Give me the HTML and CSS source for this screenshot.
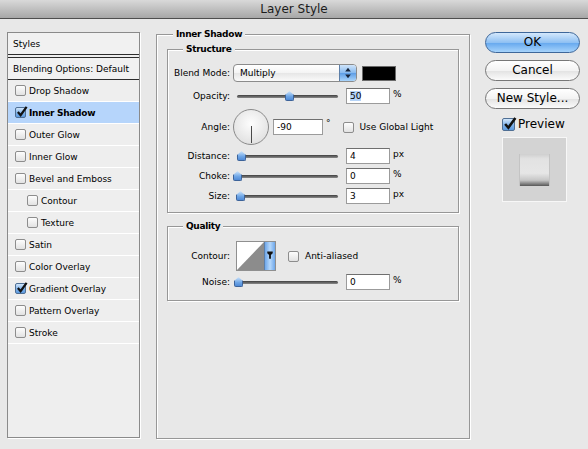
FILE: index.html
```html
<!DOCTYPE html>
<html lang="en">
<head>
    <meta charset="UTF-8">
    <title>Layer Style</title>
    <link rel="stylesheet" href="styles.css">
</head>
<body>

    <div class="titlebar">Layer Style</div>

    <div class="content">

        <!-- Effects list -->
        <div class="styles-list">
            <div class="list-head">Styles</div>
            <div class="list-head blending">Blending Options: Default</div>
            <div class="item"><span class="check"></span>Drop Shadow</div>
            <div class="item selected"><span class="check on"><svg viewBox="0 0 13 13"><path d="M2 6.5 L5 10 L11.5 1"/></svg></span>Inner Shadow</div>
            <div class="item"><span class="check"></span>Outer Glow</div>
            <div class="item"><span class="check"></span>Inner Glow</div>
            <div class="item"><span class="check"></span>Bevel and Emboss</div>
            <div class="item sub"><span class="check"></span>Contour</div>
            <div class="item sub"><span class="check"></span>Texture</div>
            <div class="item"><span class="check"></span>Satin</div>
            <div class="item"><span class="check"></span>Color Overlay</div>
            <div class="item"><span class="check on"><svg viewBox="0 0 13 13"><path d="M2 6.5 L5 10 L11.5 1"/></svg></span>Gradient Overlay</div>
            <div class="item"><span class="check"></span>Pattern Overlay</div>
            <div class="item"><span class="check"></span>Stroke</div>
        </div>

        <!-- Inner Shadow settings -->
        <div class="group outer">
            <span class="legend">Inner Shadow</span>

            <div class="group structure">
                <span class="legend">Structure</span>

                <div class="row r-blend">
                    <span class="label">Blend Mode:</span>
                    <div class="popup">
                        <span class="popup-text">Multiply</span>
                        <span class="popup-arrows"><svg viewBox="0 0 16 17"><path d="M8 3 L11 7 L5 7 Z M5 10 L11 10 L8 14 Z"/></svg></span>
                    </div>
                    <span class="swatch"></span>
                </div>

                <div class="row r-opacity">
                    <span class="label">Opacity:</span>
                    <div class="slider"><span class="thumb" style="left: 48px"></span></div>
                    <span class="field"><span class="sel">50</span></span>
                    <span class="unit">%</span>
                </div>

                <div class="row r-angle">
                    <span class="label">Angle:</span>
                    <div class="dial"><span class="hand"></span></div>
                    <span class="field angle-field">-90</span>
                    <span class="unit deg">°</span>
                    <span class="check global"></span>
                    <span class="opt-text">Use Global Light</span>
                </div>

                <div class="row">
                    <span class="label">Distance:</span>
                    <div class="slider"><span class="thumb" style="left: 0px"></span></div>
                    <span class="field">4</span>
                    <span class="unit">px</span>
                </div>

                <div class="row">
                    <span class="label">Choke:</span>
                    <div class="slider"><span class="thumb" style="left: -4px"></span></div>
                    <span class="field">0</span>
                    <span class="unit">%</span>
                </div>

                <div class="row">
                    <span class="label">Size:</span>
                    <div class="slider"><span class="thumb" style="left: -1px"></span></div>
                    <span class="field">3</span>
                    <span class="unit">px</span>
                </div>
            </div>

            <div class="group quality">
                <span class="legend">Quality</span>

                <div class="row r-contour">
                    <span class="label">Contour:</span>
                    <div class="contour">
                        <svg class="curve" viewBox="0 0 27 28"><polygon points="0,28 27,0 27,28"/></svg>
                        <span class="contour-btn"><svg viewBox="0 0 11 28"><path d="M2.5 9h6v2l-2 2v4h-2v-4l-2-2z"/></svg></span>
                    </div>
                    <span class="check aa"></span>
                    <span class="opt-text">Anti-aliased</span>
                </div>

                <div class="row r-noise">
                    <span class="label">Noise:</span>
                    <div class="slider"><span class="thumb" style="left: -3px"></span></div>
                    <span class="field">0</span>
                    <span class="unit">%</span>
                </div>
            </div>
        </div>

        <!-- Dialog buttons and preview -->
        <div class="actions">
            <div class="btn default">OK</div>
            <div class="btn">Cancel</div>
            <div class="btn">New Style...</div>
            <div class="preview-toggle">
                <span class="check big on"><svg viewBox="0 0 13 13"><path d="M2 6.5 L5 10 L11.5 1"/></svg></span>
                <span>Preview</span>
            </div>
            <div class="preview-box"><span class="preview-swatch"></span></div>
        </div>

    </div>

</body>
</html>
```

FILE: styles.css
```css
/* --- Base --- */
* { box-sizing: border-box; }

body {
    margin: 0;
    width: 588px;
    height: 449px;
    overflow: hidden;
    background-color: #e8e8e8;
    font-family: "DejaVu Sans", Verdana, sans-serif;
    font-size: 9px;
    color: #000;
}

/* --- Window title --- */
.titlebar {
    height: 19px;
    background: linear-gradient(#d9d9d9, #a7a7a7);
    border-bottom: 1px solid #4e4e4e;
    text-align: center;
    font-size: 12px;
    line-height: 18px;
    color: #1c1c1c;
}

.content {
    display: flex;
    align-items: flex-start;
    padding-top: 13px;
}

/* --- Styles list --- */
.styles-list {
    margin-left: 7px;
    width: 133px;
    height: 406px;
    background-color: #eeeeee;
    border: 1px solid #8a8a8a;
    box-shadow: 1px 1px 0 #fff;
}

.list-head {
    height: 22px;
    padding-left: 5px;
    display: flex;
    align-items: center;
    background-color: #f1f1f1;
    border-bottom: 1px solid #2c2c2c;
}

.list-head.blending {
    height: 23px;
    margin-top: 2px;
    border-top: 1px solid #2c2c2c;
}

.item {
    height: 22px;
    padding-left: 7px;
    display: flex;
    align-items: center;
    border-bottom: 1px solid #fff;
}
.item.sub { padding-left: 19px; }
.item.selected { background-color: #b6d5fb; font-weight: bold; letter-spacing: -0.3px; }
.item .check { margin-right: 3px; }

/* --- Checkboxes --- */
.check {
    position: relative;
    flex: none;
    width: 11px;
    height: 11px;
    border: 1px solid #8d8d8d;
    border-radius: 2px;
    background: linear-gradient(#fdfdfd, #e2e2e2);
}
.check.on {
    border-color: #4f6f94;
    background: linear-gradient(#d3e7fb, #7fb2ea 55%, #5d9be0);
}
.check svg {
    position: absolute;
    left: 0;
    top: -2px;
    width: 12px;
    height: 12px;
    overflow: visible;
}
.check svg path { fill: none; stroke: #111; stroke-width: 2.4; }
.check.big { width: 13px; height: 13px; }
.check.big svg { width: 14px; height: 14px; left: 0; top: -2px; }

/* --- Group boxes --- */
.group {
    position: relative;
    border: 1px solid #979797;
    box-shadow: 1px 1px 0 #fff, inset 1px 1px 0 #fff;
}

.legend {
    position: absolute;
    top: -7px;
    left: 15px;
    padding: 0 3px;
    background-color: #e8e8e8;
    font-weight: bold;
    letter-spacing: -0.3px;
    line-height: 12px;
}

.outer {
    margin-left: 16px;
    margin-top: 2px;
    width: 314px;
    height: 405px;
    padding: 14px 10px 0;
}
.outer > .legend { left: 16px; }

.structure { padding: 12px 0 6px; }
.quality { margin-top: 13px; padding: 14px 0 10px; }

/* --- Setting rows --- */
.row {
    height: 20px;
    display: flex;
    align-items: center;
}
.r-blend { height: 22px; }
.r-opacity { height: 24px; }
.r-angle { height: 38px; }
.r-contour { height: 30px; }
.r-noise { height: 16px; margin-top: 3px; }

.label {
    width: 62px;
    text-align: right;
    flex: none;
}

/* popup menu */
.popup {
    margin-left: 3px;
    width: 124px;
    height: 18px;
    display: flex;
    border: 1px solid #8b8b8b;
    border-radius: 4px;
    overflow: hidden;
    background: linear-gradient(#ffffff, #f4f4f4 50%, #e6e6e6 51%, #fafafa);
}
.popup-text { flex: 1; padding-left: 6px; line-height: 16px; }
.popup-arrows {
    width: 17px;
    border-left: 1px solid #5d7fa8;
    background: linear-gradient(#cfe4fa, #86b9ef 50%, #5d9de6 51%, #a9d4fb);
}
.popup-arrows svg { display: block; width: 16px; height: 16px; }
.popup-arrows path { fill: #17243a; }

.swatch {
    margin-left: 5px;
    width: 34px;
    height: 15px;
    background-color: #000;
    border: 1px solid #6a6a6a;
}

/* slider */
.slider {
    position: relative;
    margin-left: 7px;
    width: 101px;
    height: 10px;
    flex: none;
}
.slider::before {
    content: "";
    position: absolute;
    left: 0;
    right: 0;
    top: 4px;
    height: 3px;
    border-radius: 2px;
    background: linear-gradient(#3f3f3f, #8a8a8a);
}
.thumb {
    position: absolute;
    top: 0;
    width: 9px;
    height: 10px;
    background: linear-gradient(#cfe5fb, #6fa6e6 60%, #4f8ad7);
    border: 1px solid #3c639a;
    border-top: none;
    border-radius: 0 0 2px 2px;
    clip-path: polygon(50% 0, 100% 40%, 100% 100%, 0 100%, 0 40%);
}

/* text fields */
.field {
    margin-left: 8px;
    width: 44px;
    height: 16px;
    padding-left: 3px;
    line-height: 14px;
    background-color: #fff;
    border: 1px solid #9b9b9b;
    border-top-color: #6f6f6f;
    flex: none;
}
.sel { background-color: #b5d3f7; }

.unit { margin-left: 3px; margin-bottom: 5px; }

/* angle dial */
.dial {
    position: relative;
    margin-left: 3px;
    width: 36px;
    height: 36px;
    border-radius: 50%;
    border: 1px solid #8a8a8a;
    background: radial-gradient(circle at 50% 40%, #fdfdfd, #e4e4e4 70%, #cfcfcf);
    flex: none;
}
.hand {
    position: absolute;
    left: 17px;
    top: 16px;
    width: 1px;
    height: 17px;
    background-color: #4a4a4a;
}
.angle-field { margin-left: 4px; width: 50px; }
.unit.deg { margin-bottom: 8px; }
.check.global { margin-left: 12px; }
.opt-text { margin-left: 6px; }

/* contour picker */
.contour {
    margin-left: 6px;
    width: 40px;
    height: 30px;
    display: flex;
    border: 1px solid #8f8f8f;
    background-color: #fff;
}
.curve { width: 27px; height: 28px; display: block; }
.curve polygon { fill: #8c8c8c; }
.contour-btn {
    width: 11px;
    border-left: 1px solid #5d7fa8;
    background: linear-gradient(90deg, #6ea7ea, #b6d8fb 50%, #6ea7ea);
}
.contour-btn svg { display: block; width: 10px; height: 28px; }
.contour-btn path { fill: #111; }
.check.aa { margin-left: 12px; }

/* --- Buttons & preview --- */
.actions {
    margin-left: 15px;
    width: 95px;
    display: flex;
    flex-direction: column;
}

.btn {
    height: 21px;
    margin-bottom: 7px;
    border: 1px solid #777;
    border-radius: 11px;
    background: linear-gradient(#ffffff, #f3f3f3 50%, #e2e2e2 51%, #fbfbfb);
    font-size: 12px;
    line-height: 19px;
    text-align: center;
}
.btn.default {
    border-color: #3e679a;
    background: linear-gradient(#d4e8fc, #90c1f3 50%, #64a7ee 51%, #a6d3fb);
}

.preview-toggle {
    height: 16px;
    padding-left: 17px;
    display: flex;
    align-items: center;
    font-size: 12px;
}
.preview-toggle .check { margin-right: 3px; }

.preview-box {
    margin: 5px 0 0 17px;
    width: 65px;
    height: 65px;
    display: flex;
    align-items: center;
    justify-content: center;
    background-color: #d3d3d3;
    border: 1px solid #f7f7f7;
}
.preview-swatch {
    width: 31px;
    height: 32px;
    background: linear-gradient(#cfcfcf, #e2e2e2 15%, #e6e6e6 60%, #c6c6c6 82%, #565656);
    box-shadow: inset 1px 0 0 #c4c4c4, inset -1px 0 0 #c4c4c4;
}
```
